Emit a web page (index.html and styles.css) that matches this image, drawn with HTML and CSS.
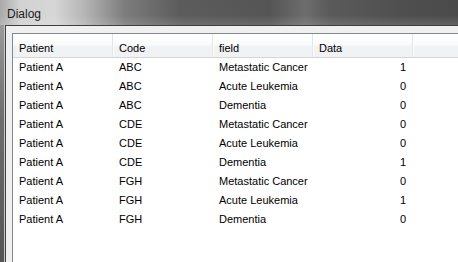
FILE: index.html
```html
<!DOCTYPE html>
<html lang="en">
<head>
    <meta charset="UTF-8">
    <title>Dialog</title>
    <link rel="stylesheet" href="styles.css">
</head>
<body>

    <div class="window">
        <!-- Title bar -->
        <div class="titlebar">
            <span class="title">Dialog</span>
        </div>

        <div class="frame">
            <div class="client">
                <div class="table">
                    <div class="row header">
                        <div class="cell">Patient</div>
                        <div class="cell">Code</div>
                        <div class="cell">field</div>
                        <div class="cell">Data</div>
                        <div class="cell filler"></div>
                    </div>
                    <div class="row"><div class="cell">Patient A</div><div class="cell">ABC</div><div class="cell">Metastatic Cancer</div><div class="cell num">1</div></div>
                    <div class="row"><div class="cell">Patient A</div><div class="cell">ABC</div><div class="cell">Acute Leukemia</div><div class="cell num">0</div></div>
                    <div class="row"><div class="cell">Patient A</div><div class="cell">ABC</div><div class="cell">Dementia</div><div class="cell num">0</div></div>
                    <div class="row"><div class="cell">Patient A</div><div class="cell">CDE</div><div class="cell">Metastatic Cancer</div><div class="cell num">0</div></div>
                    <div class="row"><div class="cell">Patient A</div><div class="cell">CDE</div><div class="cell">Acute Leukemia</div><div class="cell num">0</div></div>
                    <div class="row"><div class="cell">Patient A</div><div class="cell">CDE</div><div class="cell">Dementia</div><div class="cell num">1</div></div>
                    <div class="row"><div class="cell">Patient A</div><div class="cell">FGH</div><div class="cell">Metastatic Cancer</div><div class="cell num">0</div></div>
                    <div class="row"><div class="cell">Patient A</div><div class="cell">FGH</div><div class="cell">Acute Leukemia</div><div class="cell num">1</div></div>
                    <div class="row"><div class="cell">Patient A</div><div class="cell">FGH</div><div class="cell">Dementia</div><div class="cell num">0</div></div>
                </div>
            </div>
        </div>
    </div>

</body>
</html>
```

FILE: styles.css
```css
body {
    margin: 0;
    padding: 0;
    width: 458px;
    height: 262px;
    overflow: hidden;
    font-family: 'Liberation Sans', Arial, sans-serif;
    font-size: 11px;
    color: #000;
}
.window {
    display: flex;
    flex-direction: column;
    height: 100%;
}
.titlebar {
    height: 25px;
    flex: none;
    display: flex;
    align-items: center;
    padding-left: 7px;
    background:
        linear-gradient(to bottom, rgba(255, 255, 255, 0) 60%, rgba(255, 255, 255, 0.12) 100%),
        linear-gradient(to right, #a9a9a9 0, #d2d2d2 20px, #d6d6d6 55px, #b4b4b4 85px, #7c7c7c 125px, #5c5c5c 180px, #555 270px, #6d6d6d 305px, #5a5a5a 330px, #4f4f4f 400px, #4a4a4a 100%);
}
.title {
    font-size: 12px;
    color: #1b1b1b;
    margin-top: 2px;
}
.frame {
    flex: 1;
    display: flex;
    padding-left: 4px;
    background: linear-gradient(to bottom, #9a9a9a 0, #6e6e6e 90px, #555 100%);
    overflow: hidden;
}
.client {
    flex: 1;
    border-left: 1px solid #c9c9c9;
    box-shadow: inset 1px 1px 0 #3f3f3f;
    background: #f0f0f0;
    padding: 8px 0 0 7px;
    overflow: hidden;
}
.table {
    width: 520px;
    height: 100%;
    background: #fff;
    border-left: 1px solid #828790;
    border-top: 1px solid #828790;
}
.row {
    display: flex;
    height: 19px;
    line-height: 19px;
}
.cell {
    width: 100px;
    flex: none;
    box-sizing: border-box;
    padding-left: 6px;
    white-space: nowrap;
}
.cell.num {
    text-align: right;
    padding-right: 7px;
}
.header {
    height: 23px;
    border-bottom: 1px solid #d5d5d5;
    background: linear-gradient(to bottom, #ffffff 0, #fafbfc 45%, #f1f2f4 55%, #f1f2f4 100%);
}
.header .cell {
    padding-top: 5px;
    border-right: 1px solid #e3e4e6;
    box-shadow: 1px 0 0 #fff;
}
.header .filler {
    width: 120px;
}
```
